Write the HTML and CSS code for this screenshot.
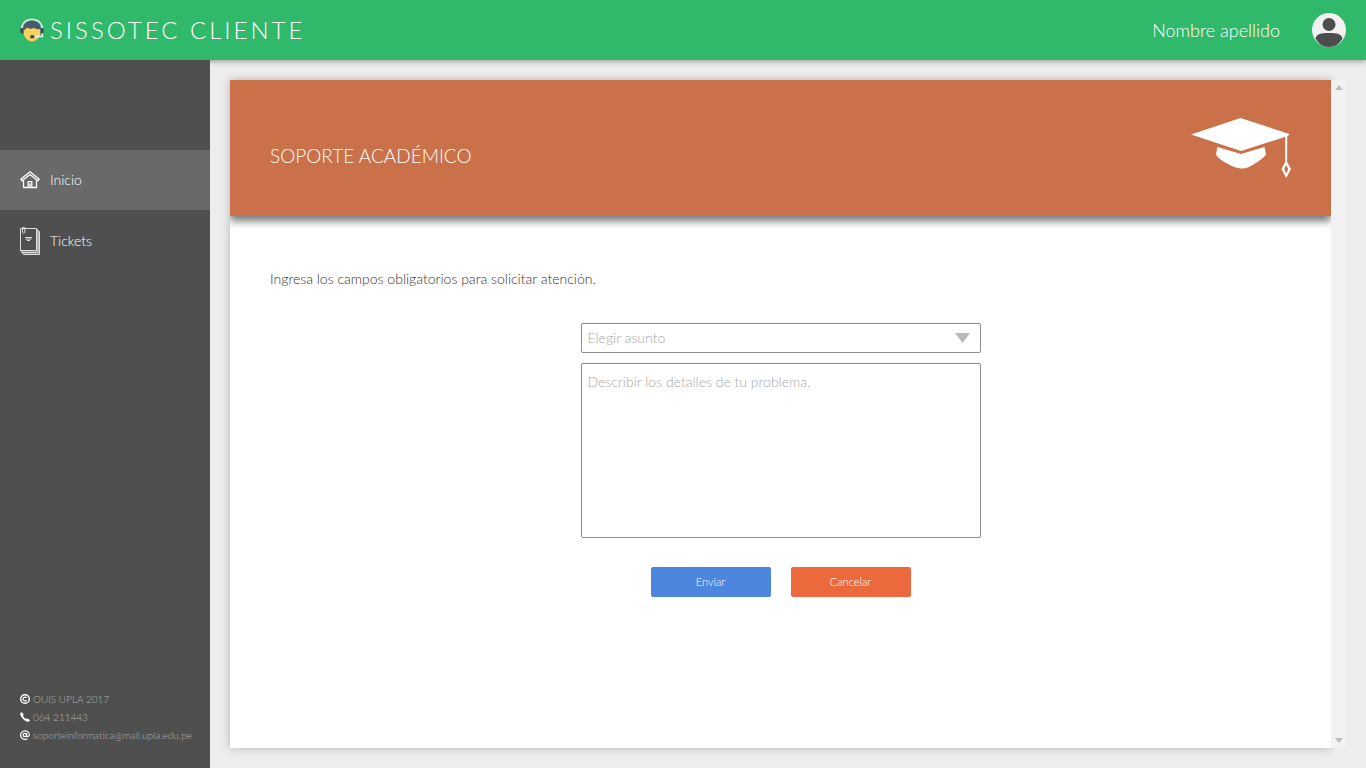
FILE: index.html
```html
<!DOCTYPE html>
<html lang="es">
<head>
<meta charset="utf-8">
<meta name="viewport" content="width=device-width, initial-scale=1">
<title>SISSOTEC Cliente</title>
<link rel="stylesheet" href="styles.css">
</head>
<body>
<header class="topbar">
  <div class="brand">
    <svg class="brand-icon" viewBox="0 0 24 24" aria-hidden="true">
      <path d="M3.500 10H20.500V14C20.500 19 16 23.500 12 23.500S3.500 19 3.500 14Z" fill="#fdd05b"/>
      <path d="M3.500 12.500V9C4 5 7 2.800 12 2.800S20 5 20.500 9V12.500L19.500 11C17 11.500 15 11 14 9.500C12 11.500 8.500 11 7 9C6.500 10.500 5 11.500 3.500 12.500Z" fill="#465a70"/>
      <path d="M1.600 11A10.400 9.800 0 0 1 22.400 11" fill="none" stroke="#e4f2ea" stroke-width="1.500"/>
      <path d="M1.500 10H3.500V15.500H2Q.2 15 .2 12.500T1.500 10ZM22.500 10H20.500V15.500H22Q23.800 15 23.800 12.500T22.500 10Z" fill="#34495e"/>
      <path d="M22.300 15.500V18.500H13.500" fill="none" stroke="#eef2f3" stroke-width="1.500"/>
      <rect x="10.300" y="17.300" width="4" height="3" rx=".5" fill="#34495e"/>
    </svg>
    <span class="brand-name">SISSOTEC CLIENTE</span>
  </div>
  <div class="user">
    <span class="user-name">Nombre apellido</span>
    <svg class="avatar" viewBox="0 0 34 34" aria-hidden="true">
      <circle cx="17" cy="17" r="17" fill="#f1f1f1"/>
      <circle cx="17" cy="11.500" r="6.500" fill="#4c4c4c"/>
      <path d="M3.500 25.500C4.500 21 9 20 17 20S29.500 21 30.500 25.500C27.500 30.500 23 34 17 34S6.500 30.500 3.500 25.500Z" fill="#4c4c4c"/>
    </svg>
  </div>
</header>
<div class="layout">
  <aside class="sidebar">
    <nav class="menu">
      <a class="menu-item active" href="#inicio">
        <svg class="menu-icon home" viewBox="0 0 20 18" fill="none" stroke="#fff" stroke-width="1.300" stroke-linejoin="round" aria-hidden="true">
          <path d="M10 .8L.8 8.200L2.200 9.800L10 3.600L17.800 9.800L19.200 8.200Z"/>
          <path d="M3.500 9.500V16.500H16.500V9.500M8.200 16.500V10.700H11.800V16.500M10 12.500V16.500"/>
        </svg>
        <span>Inicio</span>
      </a>
      <a class="menu-item" href="#tickets">
        <svg class="menu-icon book" viewBox="0 0 20 28" fill="none" stroke="#dedede" aria-hidden="true">
          <path d="M16.500 2V24H1.500L3 27.500H19.500V4.500L16.500 2" fill="#8a8a8a" stroke="none"/>
          <path d="M.5 1.500H16.500V23.500H.5ZM.5 23.500L3.500 27.500H19.500V4.500L16.500 2M2 25.500H18V3.500"/>
          <path d="M2.500 1V5.500Q3.500 7.200 4.800 5.500V.5H2.500"/>
          <path d="M5 10.500H12M5.500 12H11.500M7 13.500H10"/>
        </svg>
        <span>Tickets</span>
      </a>
    </nav>
    <footer class="contact">
      <p class="contact-row">
        <svg class="contact-icon" viewBox="0 0 10 10" fill="none" stroke="#fff" aria-hidden="true">
          <circle cx="5" cy="5" r="4.300" stroke-width="1.400"/>
          <path d="M6.600 3.900A1.900 1.900 0 1 0 6.600 6.100" stroke-width="1.200"/>
        </svg>
        <span>OUIS UPLA 2017</span>
      </p>
      <p class="contact-row">
        <svg class="contact-icon" viewBox="0 0 10 10" aria-hidden="true">
          <path d="M.3 1.200L1.800 0L3.800 2.700L2.900 3.900Q4 6 6.100 7.100L7.300 6.200L10 8.200L8.800 9.700Q6.500 10.500 3 7T.3 1.200Z" fill="#fff"/>
        </svg>
        <span>064 211443</span>
      </p>
      <p class="contact-row">
        <svg class="contact-icon" viewBox="0 0 10 10" fill="none" stroke="#fff" stroke-width="1.200" aria-hidden="true">
          <circle cx="4.800" cy="5" r="1.700"/>
          <path d="M6.600 3V6Q7 7.200 8.200 6.500Q9.400 5.500 9.400 4.500A4.400 4.300 0 1 0 7.500 8.700"/>
        </svg>
        <a class="mail" href="mailto:soporteinformatica@mail.upla.edu.pe">soporteinformatica@mail.upla.edu.pe</a>
      </p>
    </footer>
  </aside>
  <main class="main">
    <section class="card">
      <div class="banner">
        <h1 class="banner-title">SOPORTE ACADÉMICO</h1>
        <svg class="cap" viewBox="0 0 100 60" fill="#fff" aria-hidden="true">
          <path d="M0 16.500L49.500 0L98.500 16L97 18L50 33Z"/>
          <path d="M26.500 29L50 36L73.500 29L75 36Q74 39 65 45T50 50.500T35 45T25 36Z"/>
          <path d="M94.200 17H96.200V43H94.200Z"/>
          <path fill-rule="evenodd" d="M95.200 42L100 51L95.200 60L90.500 51ZM95.200 47L93.300 51L95.200 55.500L97.200 51Z"/>
        </svg>
      </div>
      <div class="content">
        <p class="intro">Ingresa los campos obligatorios para solicitar atención.</p>
        <form class="form">
          <div class="select-box">
            <select class="field subject" aria-label="Asunto">
              <option>Elegir asunto</option>
            </select>
            <svg class="arrow" viewBox="0 0 15 10" aria-hidden="true"><path d="M0 0H15L7.500 10Z" fill="#b9b9b9"/></svg>
          </div>
          <textarea class="field details" aria-label="Detalles del problema" placeholder="Describir los detalles de tu problema."></textarea>
          <div class="actions">
            <button class="btn send" type="button">Enviar</button>
            <button class="btn cancel" type="button">Cancelar</button>
          </div>
        </form>
      </div>
    </section>
    <div class="scroller">
      <button class="scroll-btn" type="button" aria-label="Subir"><svg class="scroll-icon" viewBox="0 0 8 5"><path d="M0 5L4 0L8 5Z" fill="#bbb"/></svg></button>
      <button class="scroll-btn" type="button" aria-label="Bajar"><svg class="scroll-icon" viewBox="0 0 8 5"><path d="M0 0H8L4 5Z" fill="#bbb"/></svg></button>
    </div>
  </main>
</div>
</body>
</html>
```
FILE: styles.css
```css
* {
  box-sizing: border-box;
}

body {
  margin: 0;
  min-height: 100vh;
  display: flex;
  flex-direction: column;
  background: #ededed;
  font-family: Lato, "Liberation Sans", sans-serif;
  font-weight: 300;
  font-size: 14px;
  line-height: 20px;
}

h1,
p {
  margin: 0;
  font-weight: 300;
}

svg {
  display: block;
  flex: none;
}

.topbar {
  position: relative;
  z-index: 1;
  height: 60px;
  padding: 0 20px;
  display: flex;
  align-items: center;
  justify-content: space-between;
  background: #31b96b;
  color: #fff;
  box-shadow: 0 1px 6px rgba(0, 0, 0, 0.4);
}

.brand {
  display: flex;
  align-items: center;
  gap: 6px;
}

.brand-icon {
  width: 24px;
  height: 24px;
}

.brand-name {
  font-size: 24px;
  line-height: 30px;
  letter-spacing: 3px;
}

.user {
  display: flex;
  align-items: center;
  gap: 32px;
}

.user-name {
  font-size: 18px;
}

.avatar {
  width: 34px;
  height: 34px;
}

.layout {
  flex: 1;
  display: flex;
}

.sidebar {
  position: relative;
  z-index: 2;
  width: 210px;
  flex: none;
  padding: 90px 0 24px;
  display: flex;
  flex-direction: column;
  justify-content: space-between;
  background: #4f4f4f;
}

.menu {
  display: flex;
  flex-direction: column;
  gap: 1px;
}

.menu-item {
  height: 60px;
  padding: 0 20px;
  display: flex;
  align-items: center;
  gap: 10px;
  color: #fff;
  text-decoration: none;
}

.menu-item.active {
  background: #696969;
}

.menu-icon {
  width: 20px;
}

.home {
  height: 18px;
}

.book {
  height: 28px;
}

.contact {
  padding: 0 20px;
  font-size: 10px;
  line-height: 18px;
  color: #b0b0b0;
}

.contact-row {
  display: flex;
  align-items: center;
  gap: 3px;
}

.contact-icon {
  width: 10px;
  height: 10px;
}

.mail {
  color: inherit;
  text-decoration: none;
}

.main {
  flex: 1;
  min-width: 0;
  padding: 20px;
  display: flex;
}

.card {
  flex: 1;
  min-width: 0;
  background: #fff;
  box-shadow: 0 0 8px rgba(0, 0, 0, 0.25);
}

.banner {
  height: 136px;
  padding: 36px 40px 0;
  display: flex;
  justify-content: space-between;
  background: #ca7149;
  color: #fff;
  box-shadow: 0 5px 8px rgba(0, 0, 0, 0.55);
  clip-path: inset(0 0 -20px 0);
}

.banner-title {
  padding-top: 28px;
  font-size: 19px;
  line-height: 24px;
}

.cap {
  width: 100px;
  height: 64px;
}

.content {
  padding: 53px 40px 40px;
}

.intro {
  color: #333;
}

.form {
  max-width: 400px;
  margin: 34px auto 0;
  display: flex;
  flex-direction: column;
  gap: 10px;
}

.select-box {
  position: relative;
}

.field {
  display: block;
  width: 100%;
  margin: 0;
  border: 1px solid #8e8e8e;
  border-radius: 2px;
  background: #fff;
  font: inherit;
  color: #a8a8a8;
}

.subject {
  height: 30px;
  padding: 0 6px;
  appearance: none;
}

.arrow {
  position: absolute;
  top: 10px;
  right: 11px;
  width: 15px;
  height: 10px;
  pointer-events: none;
}

.details {
  height: 175px;
  padding: 8px 6px;
  resize: none;
}

.details::placeholder {
  color: #a8a8a8;
}

.actions {
  padding-top: 19px;
  display: flex;
  justify-content: center;
  gap: 20px;
}

.btn {
  width: 120px;
  height: 30px;
  padding: 0;
  border: 0;
  border-radius: 2px;
  font: inherit;
  font-size: 11px;
  color: #fff;
}

.send {
  background: #4d86df;
}

.cancel {
  background: #ec693e;
}

.scroller {
  position: relative;
  width: 15px;
  flex: none;
  display: flex;
  flex-direction: column;
  justify-content: space-between;
  background: #f2f2f2;
  border-radius: 0 4px 4px 0;
}

.scroll-btn {
  height: 15px;
  padding: 0;
  border: 0;
  background: none;
  display: flex;
  align-items: center;
  justify-content: center;
}

.scroll-icon {
  width: 8px;
  height: 5px;
}
```
